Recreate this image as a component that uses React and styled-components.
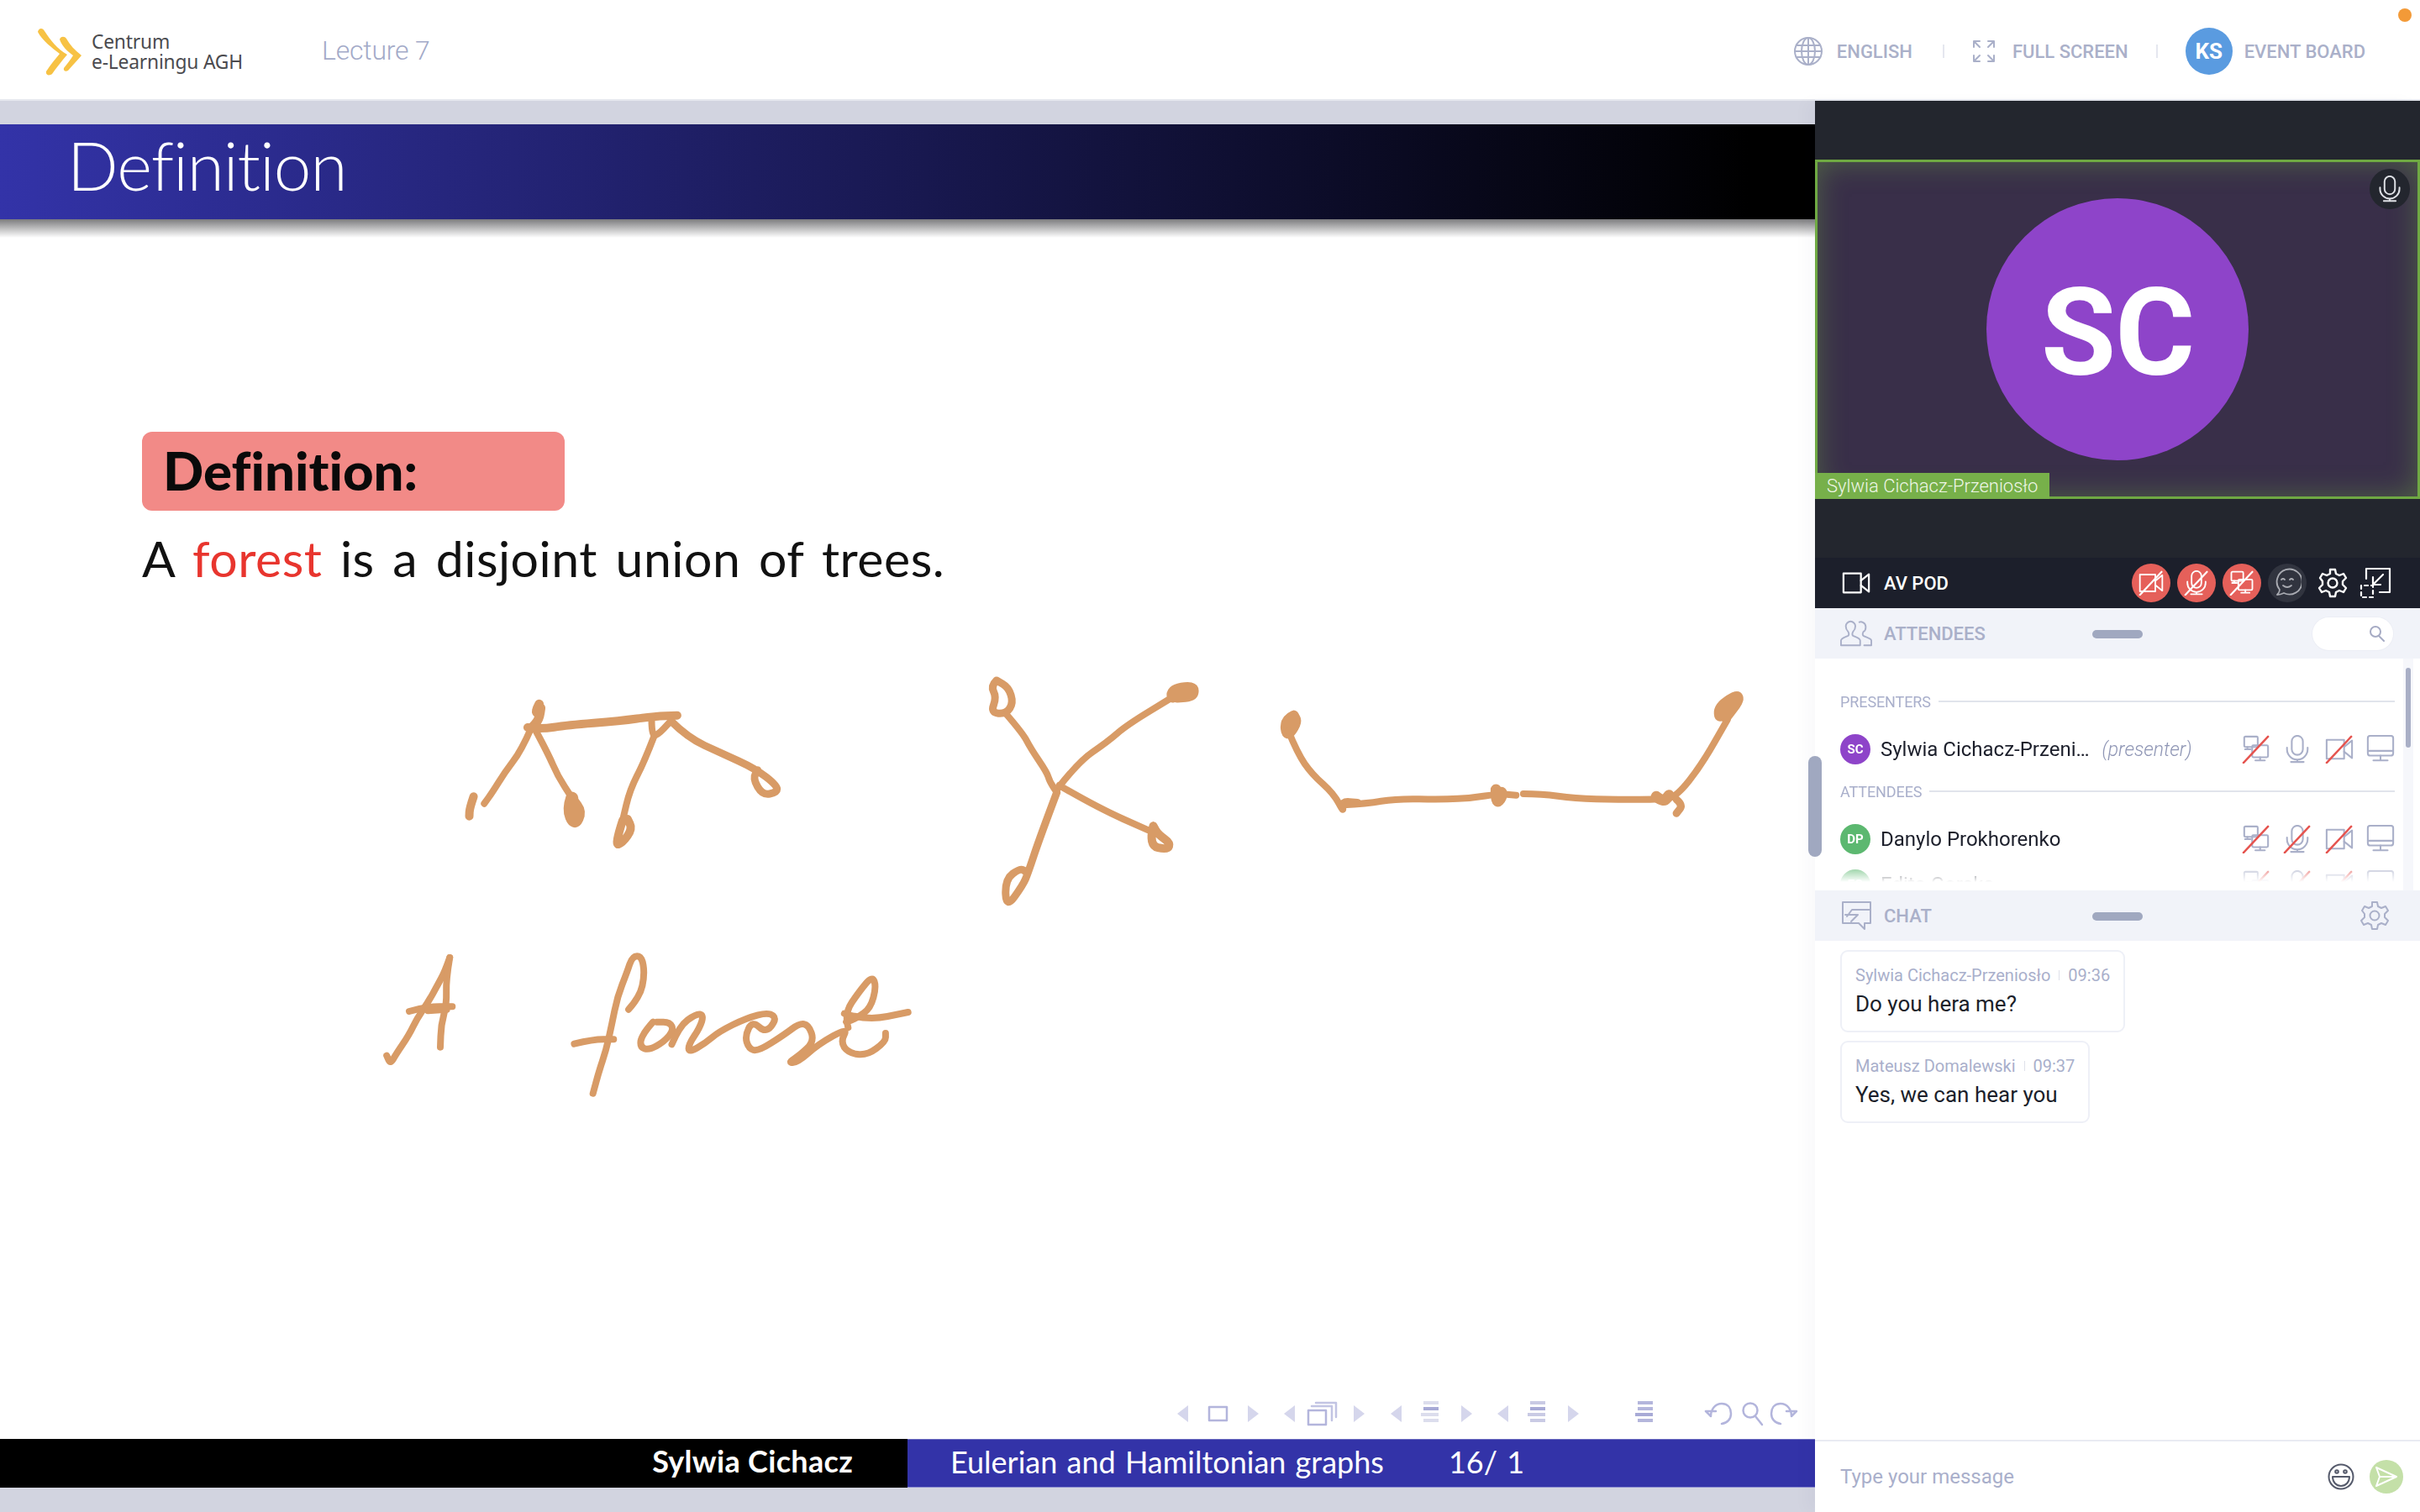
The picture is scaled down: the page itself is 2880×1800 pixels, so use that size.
import React from "react";
import styled, { createGlobalStyle } from "styled-components";

const Global = createGlobalStyle`
  html, body { margin: 0; padding: 0; background: #fff; }
  body { font-family: Roboto, "Liberation Sans", sans-serif; }
  * { box-sizing: border-box; }
`;

const Page = styled.div`
  width: 2880px; height: 1800px; display: flex; flex-direction: column; overflow: hidden; position: relative;
`;
const Dot = styled.span`
  position: absolute; left: 2854px; top: 10px; width: 16px; height: 16px; border-radius: 50%; background: #f39a38;
`;
const Header = styled.header`
  height: 120px; flex: none; display: flex; align-items: center; padding: 4px 65px 0 44px; background: #fff; border-bottom: 2px solid #e6e8ef;
`;
const Logo = styled.div`display: flex; align-items: center; gap: 11px; width: 339px; margin-top: 1px;`;
const LogoText = styled.div`
  font-family: "Noto Sans", sans-serif; font-size: 22.8px; line-height: 24px; color: #4b4b4f; letter-spacing: -.2px;
`;
const Lecture = styled.div`font-size: 32px; font-weight: 300; color: #a3aac8; letter-spacing: -.2px; margin-top: -2px;`;
const Spacer = styled.div`flex: 1;`;
const HeadItem = styled.div`
  display: flex; align-items: center; gap: ${p => p.$gap || 17}px; font-size: 22px; font-weight: 500; color: #aab0c9;
`;
const HeadSep = styled.span`width: 2px; height: 16px; background: #e5e7ef; margin: 0 33px 0 ${p => p.$l || 33}px;`;
const Avatar = styled.span`
  width: ${p => p.$s}px; height: ${p => p.$s}px; flex: none; border-radius: 50%; background: ${p => p.$bg}; color: #fff;
  display: inline-flex; align-items: center; justify-content: center; font-weight: 700; font-size: ${p => p.$f}px;
`;

const Main = styled.main`flex: 1; display: flex; min-height: 0;`;
const Slide = styled.section`
  width: 2160px; flex: none; position: relative; display: flex; flex-direction: column; background: #d2d4e0;
  font-family: Lato, "Open Sans", sans-serif; font-variant-ligatures: none;
`;
const Band = styled.div`height: ${p => p.$h}px; flex: none;`;
const Banner = styled.div`
  height: 113px; flex: none; background: linear-gradient(90deg, #3333a8 0, #000 2080px); color: #fff; padding-left: 80px;
  font-size: 80px; font-weight: 300; line-height: 96px; letter-spacing: -1px;
`;
const BannerShadow = styled.div`height: 22px; flex: none; background: linear-gradient(180deg, #7c7c7e, #ffffff);`;
const SlideBody = styled.div`flex: 1; background: #fff; display: flex; flex-direction: column; padding: 231px 0 0 169px;`;
const DefBox = styled.div`
  width: 503px; height: 94px; border-radius: 12px; background: #f28a87; color: #0a0a0a; font-weight: 900; font-size: 63.5px; line-height: 92px; padding-left: 25px;
`;
const Sentence = styled.p`
  margin: 18px 0 0; font-size: 59px; line-height: 78px; color: #111; word-spacing: 6px; letter-spacing: .5px;
`;
const Red = styled.span`color: #e8352e;`;
const NavStrip = styled.div`margin: auto 0 15px 1231px; line-height: 0;`;
const Footer = styled.div`height: 58px; flex: none; display: flex; color: #fff; font-size: 36px; line-height: 52px;`;
const FootLeft = styled.div`width: 1080px; background: #000; text-align: right; padding-right: 65px; font-weight: 700; letter-spacing: .3px;`;
const FootRight = styled.div`
  width: 1080px; background: #3333a8; padding-left: 51px; display: flex; gap: 77px; word-spacing: 2px;
  border-top: 1px solid #6c6cc0; border-bottom: 1px solid #8a8ad0;
`;
const Ink = styled.svg`position: absolute; left: 0; top: 0; pointer-events: none;`;

const Panel = styled.aside`
  width: 720px; flex: none; display: flex; flex-direction: column; background: #fff; position: relative;
  box-shadow: -12px 0 16px rgba(40, 45, 80, .025);
`;
const SlideThumb = styled.span`
  position: absolute; left: -8px; top: 780px; width: 16px; height: 120px; border-radius: 8px; background: #a0a8c0;
`;
const VideoArea = styled.div`height: 544px; flex: none; background: #23262e; padding: 70px 0;`;
const Tile = styled.div`
  height: 404px; border: 3px solid #6fa943; background: #392f49; position: relative; display: flex; align-items: center; justify-content: center;
  box-shadow: inset 0 0 34px rgba(111, 169, 67, .42);
`;
const BigAvatar = styled.div`
  width: 312px; height: 312px; border-radius: 50%; background: #8e44c9; color: #fff; font-weight: 700; font-size: 145px; letter-spacing: -1px; padding-top: 8px;
  display: flex; align-items: center; justify-content: center;
`;
const NameTag = styled.span`
  position: absolute; left: -3px; bottom: -3px; height: 31px; width: 279px; background: #77b04a; color: #eef6e6; font-size: 22px; font-weight: 300; line-height: 31px; padding-left: 14px; white-space: nowrap;
`;
const MicBadge = styled.span`
  position: absolute; right: 9px; top: 8px; width: 48px; height: 48px; border-radius: 50%; background: #23262e; display: flex; align-items: center; justify-content: center;
`;
const AvBar = styled.div`
  height: 60px; flex: none; background: #1c1f2b; display: flex; align-items: center; padding: 0 34px 0 32px; color: #fff; font-size: 22px; font-weight: 500;
`;
const SectionTitle = styled.span`margin-left: ${p => p.$m || 16}px;`;
const Round = styled.span`
  width: 46px; height: 46px; border-radius: 50%; margin-right: 8px; background: ${p => p.$bg}; display: flex; align-items: center; justify-content: center;
`;
const BarHead = styled.div`
  height: 60px; flex: none; background: #f1f3f9; display: flex; align-items: center; padding: 0 32px 0 30px; position: relative; color: #aab0c9; font-size: 22px; font-weight: 500;
`;
const Handle = styled.span`
  position: absolute; left: 330px; top: 26px; width: 60px; height: 10px; border-radius: 5px; background: #a0a8c0;
`;
const SearchPill = styled.span`
  width: 96px; height: 39px; border-radius: 20px; background: #fff; box-shadow: 0 0 0 1px #eceef5; display: flex; align-items: center; justify-content: flex-end; padding-right: 10px;
`;
const ListWrap = styled.div`height: 276px; flex: none; position: relative; overflow: hidden;`;
const List = styled.div`
  height: 266px; padding: 42px 30px 0; overflow: hidden;
  mask-image: linear-gradient(180deg, #000 240px, transparent 266px);
`;
const ListThumb = styled.span`
  position: absolute; right: 11px; top: 11px; width: 6px; height: 95px; border-radius: 3px; background: #a9afc6;
`;
const ListTrack = styled.span`position: absolute; right: 8px; top: 0; bottom: 0; width: 12px; background: #f6f7fb; `;
const GroupTitle = styled.div`
  display: flex; align-items: center; gap: 9px; font-size: 18px; color: #a9afcb; height: 18px; letter-spacing: -.1px;
`;
const Rule = styled.span`flex: 1; height: 2px; background: #e1e4ec;`;
const Person = styled.div`
  display: flex; align-items: center; height: 36px; margin: ${p => p.$top ?? 30}px 0 23px; font-size: 24px; color: #1c1f2b;
`;
const PersonName = styled.span`margin-left: 12px; white-space: nowrap;`;
const Role = styled.span`margin-left: 15px; font-style: italic; font-weight: 300; color: #8f96b5; font-size: 23px;`;
const Tools = styled.span`margin-left: auto; display: flex; align-items: center; width: 182px; justify-content: space-between;`;
const ChatBody = styled.div`flex: 1; padding: 11px 30px 0; display: flex; flex-direction: column; align-items: flex-start; gap: 10px;`;
const Bubble = styled.div`
  height: 98px; border: 2px solid #eef0f7; border-radius: 9px; padding: 16px 16px 0; background: #fff;
`;
const BubbleMeta = styled.div`display: flex; align-items: center; color: #a9afcb; font-size: 20px; line-height: 24px; white-space: nowrap;`;
const MetaSep = styled.span`width: 1px; height: 12px; background: #dfe1ea; margin: 0 10px;`;
const BubbleText = styled.div`font-size: 26px; line-height: 34px; color: #1c1f2b; margin-top: 5px; white-space: nowrap;`;
const Composer = styled.div`
  height: 86px; flex: none; border-top: 2px solid #e9ebf2; display: flex; align-items: center; padding: 0 20px 0 30px; font-size: 24px; color: #a9afcb;
`;
const Send = styled.span`
  width: 40px; height: 40px; border-radius: 50%; background: #c4e0a8; margin-left: 18px; display: flex; align-items: center; justify-content: center;
`;
const GearSlot = styled.span`display: flex; margin: 0 ${p => p.$r || 0}px 0 ${p => p.$l || 0}px;`;

const Line = styled.svg`
  display: block; flex: none; fill: none; stroke: ${p => p.$c || "#aab0c9"}; stroke-width: ${p => p.$w || 2}; stroke-linecap: round; stroke-linejoin: round;
`;

const shapes = {
  screens: <><rect x="2" y="2" width="17" height="13" rx="1.5" /><path d="M6 15v3M3 18h7" /><rect x="12" y="13" width="20" height="15" rx="1.5" /><path d="M22 28v4M16 32h12" /></>,
  mic: <><rect x="10" y="1" width="14" height="24" rx="7" /><path d="M4 16v2a13 13 0 0 0 26 0v-2M17 31v3M9 34h16" /></>,
  cam: <><rect x="1" y="6" width="22" height="24" /><path d="M23 15l10-8v22l-10-8" /></>,
  monitor: <><rect x="1" y="1" width="32" height="25" rx="3" /><path d="M1 20h32M17 26v6M8 32h18" /></>,
};
const Glyph = ({ name, c, slash, slashC = "#e5544f", w = 2.2, size = 34 }) => (
  <Line width={size} height={size} viewBox="0 0 34 36" $c={c} $w={w}>
    {shapes[name]}
    {slash && <path d="M1 35L32 2" stroke={slashC} strokeWidth={w + .4} />}
  </Line>
);
const Gear = ({ c, size = 36, w = 2.4 }) => (
  <Line width={size} height={size} viewBox="0 0 36 36" $c={c} $w={w}>
    <path d="M15 2h6l1 5 4 2 5-2 3 5-4 4v4l4 4-3 5-5-2-4 2-1 5h-6l-1-5-4-2-5 2-3-5 4-4v-4L3 12l3-5 5 2 4-2z" />
    <circle cx="18" cy="18" r="5.5" />
  </Line>
);
const Tool4 = ({ micSlash }) => (
  <Tools>
    <Glyph name="screens" slash />
    <Glyph name="mic" slash={micSlash} />
    <Glyph name="cam" slash />
    <Glyph name="monitor" />
  </Tools>
);

function toPath(pts, ox, oy, sx, sy) {
  const p = pts.map(([x, y]) => [ox + x / sx, oy + y / sy]);
  let d = `M${p[0][0].toFixed(1)} ${p[0][1].toFixed(1)}`;
  for (let i = 1; i < p.length - 1; i++) {
    const mx = (p[i][0] + p[i + 1][0]) / 2, my = (p[i][1] + p[i + 1][1]) / 2;
    d += `Q${p[i][0].toFixed(1)} ${p[i][1].toFixed(1)} ${mx.toFixed(1)} ${my.toFixed(1)}`;
  }
  const l = p[p.length - 1];
  return d + `L${l[0].toFixed(1)} ${l[1].toFixed(1)}`;
}
const z7 = [520, 780, 1.742, 3], z8 = [1440, 780, 2.306, 3], z9 = [420, 1100, 2.24, 3];
const strokes = [
  [z7, [[212,175],[203,205],[214,205],[216,180],[212,230],[195,262]], 11],
  [z7, [[195,262],[175,340],[140,420],[115,490],[98,530]]],
  [z7, [[76,505],[68,545],[67,575]], 10],
  [z7, [[205,270],[230,350],[250,430],[280,510]]],
  [z7, [[280,510],[272,550],[285,605],[297,560],[280,520]], 15],
  [z7, [[188,258],[215,265],[270,250],[380,235],[450,218],[498,215]], 10],
  [z7, [[445,230],[445,280],[455,290],[485,235]]],
  [z7, [[450,290],[430,380],[400,480],[385,590]]],
  [z7, [[385,590],[368,680],[385,670],[405,620],[395,585]], 10],
  [z7, [[485,235],[520,295],[590,350],[660,405],[705,465],[705,490],[675,500],[655,440],[665,410]], 9],
  [z7, [[1160,90],[1148,110],[1160,150],[1148,205],[1180,210],[1195,170],[1185,115],[1160,90]], 9],
  [z7, [[1180,210],[1215,280],[1230,330],[1265,420],[1270,450],[1285,490]]],
  [z7, [[1285,480],[1330,380],[1390,310],[1430,250],[1525,150]]],
  [z7, [[1525,150],[1520,125],[1568,110],[1568,145],[1535,150]], 13],
  [z7, [[1290,465],[1370,545],[1475,625]]],
  [z7, [[1485,610],[1475,680],[1515,695],[1520,670],[1495,640],[1485,610]], 10],
  [z7, [[1285,490],[1250,650],[1225,780],[1215,820],[1180,905],[1178,800],[1210,760],[1222,775]], 9],
  [z8, [[230,215],[205,230],[210,295],[240,240],[230,215]], 12],
  [z8, [[215,270],[240,350],[280,425],[340,495],[368,565],[360,520],[405,525]]],
  [z8, [[365,535],[430,530],[510,512],[640,515],[720,510],[790,495],[840,500]]],
  [z8, [[785,480],[785,530],[800,510],[800,490]], 13],
  [z8, [[860,495],[910,495],[1000,512],[1120,515],[1240,515],[1280,505],[1350,390],[1420,230]]],
  [z8, [[1225,505],[1245,525],[1260,500]], 13],
  [z8, [[1400,215],[1395,190],[1445,145],[1450,160],[1415,220]], 14],
  [z8, [[1280,515],[1298,535],[1280,565]], 9],
  [z9, [[258,120],[245,170],[225,220],[200,280],[170,340],[150,395],[115,465],[100,500],[90,470]]],
  [z9, [[258,120],[248,200],[250,285],[235,360],[233,440]]],
  [z9, [[150,312],[195,295],[265,295]]],
  [z9, [[200,310],[250,305]]],
  [z9, [[735,305],[765,260],[778,180],[770,115],[745,115],[730,175],[705,260],[690,360],[675,450],[655,530],[640,605]]],
  [z9, [[590,428],[640,412],[695,412]]],
  [z9, [[800,350],[770,395],[765,440],[790,450],[830,420],[855,380],[845,350],[810,350]]],
  [z9, [[850,430],[870,365],[915,320],[935,325],[925,370],[895,430],[895,460],[940,425],[975,385],[1050,335],[1110,315],[1130,340],[1100,390],[1065,345],[1045,400],[1055,445],[1080,455],[1150,395],[1190,355],[1215,360],[1230,420],[1190,470],[1160,495],[1185,495],[1240,430],[1320,370],[1300,420],[1320,460],[1370,470],[1420,420],[1420,390]]],
  [z9, [[1320,370],[1310,320],[1350,240],[1385,185],[1395,225],[1380,300],[1345,335],[1315,350]]],
  [z9, [[1310,320],[1370,345],[1480,315]]],
];

const Tri = ({ x, dir, o = .55 }) => (
  <path d={dir < 0 ? `M${x + 13} 7L${x} 17l13 10z` : `M${x} 7l13 10-13 10z`} fill="#b3b5dc" opacity={o} stroke="none" />
);
const Bars = ({ x, hi, base = "#dcdded" }) => (
  <g stroke="none">
    {[2, 9, 16, 23].map((y, i) => (
      <rect key={y} x={x + (i === 2 ? 0 : 3)} y={y} width={i === 2 ? 21 : 18} height="4" fill={i === hi ? "#a8aad6" : base} />
    ))}
  </g>
);
const NavIcons = () => (
  <Line width="745" height="32" viewBox="1400 0 745 32" $c="#b3b5dc" $w={2.5}>
    <Tri x={1401} dir={-1} />
    <rect x="1439" y="9" width="21" height="16" />
    <Tri x={1485} dir={1} />
    <Tri x={1528} dir={-1} />
    <path d="M1566 4h24v17M1561 8h24v17" opacity=".8" />
    <rect x="1557" y="13" width="21" height="17" fill="#fff" />
    <Tri x={1611} dir={1} />
    <Tri x={1655} dir={-1} />
    <Bars x={1691} hi={1} />
    <Tri x={1739} dir={1} />
    <Tri x={1782} dir={-1} />
    <Bars x={1818} hi={1} base="#c9cae4" />
    <Tri x={1866} dir={1} />
    <Bars x={1946} hi={2} base="#b4b6dc" />
    <path d="M2036 20l-6-6h12M2036 20c0-8 5-15 13-15 8 0 11 6 11 12s-4 11-11 12" />
    <circle cx="2083" cy="13" r="8.5" />
    <path d="M2089 20l8 10" />
    <path d="M2132 20l6-6h-12M2132 20c0-8-5-15-13-15-8 0-11 6-11 12s4 11 11 12" />
  </Line>
);

export default function App() {
  return (
    <Page>
      <Global />
      <Dot />
      <Header>
        <Logo>
          <svg width="54" height="56" viewBox="0 0 54 56">
            <path d="M1 4C2-1 7-1 9 3c7 11 15 21 27 28-7 8-13 16-18 23-4 3-8 1-7-3 5-8 11-15 16-21C18 23 6 14 1 4z" fill="#f7c244" />
            <path d="M27 13c1-4 6-4 8-1 4 7 10 14 18 20-5 6-11 12-16 18-3 2-6 0-5-3 4-5 8-10 11-15-7-5-13-11-16-19z" fill="#f7c244" />
          </svg>
          <LogoText>Centrum<br />e-Learningu AGH</LogoText>
        </Logo>
        <Lecture>Lecture 7</Lecture>
        <Spacer />
        <HeadItem>
          <Line width="34" height="34" viewBox="0 0 34 34" $w={2}>
            <circle cx="17" cy="17" r="16" /><ellipse cx="17" cy="17" rx="8" ry="16" /><path d="M17 1v32M3 10h28M3 24h28M1 17h32" />
          </Line>
          ENGLISH
        </HeadItem>
        <HeadSep $l={36} />
        <HeadItem $gap={20}>
          <Line width="28" height="28" viewBox="0 0 28 28" $w={2}>
            <path d="M2 9V2h7M2 2l7 7M26 9V2h-7M26 2l-7 7M2 19v7h7M2 26l7-7M26 19v7h-7M26 26l-7-7" />
          </Line>
          FULL SCREEN
        </HeadItem>
        <HeadSep />
        <HeadItem $gap={14}>
          <Avatar $s={56} $bg="#5a9be0" $f={26}>KS</Avatar>
          EVENT BOARD
        </HeadItem>
      </Header>
      <Main>
        <Slide>
          <Band $h={28} />
          <Banner>Definition</Banner>
          <BannerShadow />
          <SlideBody>
            <DefBox>Definition:</DefBox>
            <Sentence>A <Red>forest</Red> is a disjoint union of trees.</Sentence>
            <NavStrip><NavIcons /></NavStrip>
          </SlideBody>
          <Footer>
            <FootLeft>Sylwia Cichacz</FootLeft>
            <FootRight><span>Eulerian and Hamiltonian graphs</span><span>16/ 1</span></FootRight>
          </Footer>
          <Band $h={29} />
          <Ink width="2160" height="1680" viewBox="0 120 2160 1680" fill="none" stroke="#d89b66" strokeLinecap="round" strokeLinejoin="round">
            {strokes.map(([z, pts, w], i) => (
              <path key={i} d={toPath(pts, ...z)} strokeWidth={w || 8} />
            ))}
          </Ink>
        </Slide>
        <Panel>
          <SlideThumb />
          <VideoArea>
            <Tile>
              <BigAvatar>SC</BigAvatar>
              <NameTag>Sylwia Cichacz-Przeniosło</NameTag>
              <MicBadge><Glyph name="mic" c="#dfe1e6" size={32} /></MicBadge>
            </Tile>
          </VideoArea>
          <AvBar>
            <Glyph name="cam" c="#fff" w={2.4} />
            <SectionTitle>AV POD</SectionTitle>
            <Spacer />
            <Round $bg="#e5605a"><Glyph name="cam" c="#fff" slash slashC="#fff" size={30} /></Round>
            <Round $bg="#e5605a"><Glyph name="mic" c="#fff" slash slashC="#fff" size={30} /></Round>
            <Round $bg="#e5605a"><Glyph name="screens" c="#fff" slash slashC="#fff" size={30} /></Round>
            <Round $bg="#31343f">
              <Line width="34" height="36" viewBox="0 0 34 36" $c="#a9abb2" $w={1.8}>
                <path d="M5 32c2-2 3-4 3-6a15 15 0 1 1 5 4c-2 1-5 2-8 2z" /><path d="M10 14q2-2 4 0M20 14q2-2 4 0M12 21q5 4 10 0" />
              </Line>
            </Round>
            <GearSlot $l={5}><Gear c="#fff" /></GearSlot>
            <GearSlot $l={14}>
              <Line width="38" height="38" viewBox="0 0 38 38" $c="#fff" $w={2.2}>
                <path d="M8 14V2h28v28H24M28 9L16 21M16 12v9h9" />
                <path d="M2 22v14h14V22z" strokeDasharray="4 4" />
              </Line>
            </GearSlot>
          </AvBar>
          <BarHead>
            <Line width="38" height="32" viewBox="0 0 40 32">
              <path d="M1 31v-6c0-3 5-4 9-6 1-1 1-3 0-5-2-2-3-5-3-7 0-3 3-6 6-6s6 3 6 6c0 2-1 5-3 7-1 2-1 4 0 5 4 2 9 3 9 6v6z" />
              <path d="M24 2c2-1 8 0 8 6 0 2-1 5-3 6-1 2-1 4 0 5 3 2 10 3 10 6v6h-9" />
            </Line>
            <SectionTitle $m={14}>ATTENDEES</SectionTitle>
            <Handle />
            <Spacer />
            <SearchPill>
              <Line width="18" height="20" viewBox="0 0 18 20" $c="#a6abc4" $w={2}>
                <circle cx="7" cy="8" r="6" /><path d="M11 13l6 6" />
              </Line>
            </SearchPill>
          </BarHead>
          <ListWrap>
            <ListTrack />
            <ListThumb />
            <List>
              <GroupTitle>PRESENTERS<Rule /></GroupTitle>
              <Person>
                <Avatar $s={36} $bg="#8e44c9" $f={15}>SC</Avatar>
                <PersonName>Sylwia Cichacz-Przeni…</PersonName>
                <Role>(presenter)</Role>
                <Tool4 />
              </Person>
              <GroupTitle>ATTENDEES<Rule /></GroupTitle>
              <Person>
                <Avatar $s={36} $bg="#5cb870" $f={15}>DP</Avatar>
                <PersonName>Danylo Prokhorenko</PersonName>
                <Tool4 micSlash />
              </Person>
              <Person $top={-5}>
                <Avatar $s={36} $bg="#5cb870" $f={15}>EG</Avatar>
                <PersonName>Edita Gorska</PersonName>
                <Tool4 micSlash />
              </Person>
            </List>
          </ListWrap>
          <BarHead>
            <GearSlot $l={2}>
              <Line width="36" height="34" viewBox="0 0 36 34">
                <path d="M1 1h33v25H27v7l-7-7H1zM6 18l6-8h22M4 16h15l-8 8" />
              </Line>
            </GearSlot>
            <SectionTitle $m={14}>CHAT</SectionTitle>
            <Handle />
            <Spacer />
            <GearSlot $r={4}><Gear c="#aab0c9" w={2} /></GearSlot>
          </BarHead>
          <ChatBody>
            <Bubble>
              <BubbleMeta>Sylwia Cichacz-Przeniosło<MetaSep />09:36</BubbleMeta>
              <BubbleText>Do you hera me?</BubbleText>
            </Bubble>
            <Bubble>
              <BubbleMeta>Mateusz Domalewski<MetaSep />09:37</BubbleMeta>
              <BubbleText>Yes, we can hear you</BubbleText>
            </Bubble>
          </ChatBody>
          <Composer>
            Type your message
            <Spacer />
            <Line width="32" height="32" viewBox="0 0 32 32" $c="#555a6b" $w={2}>
              <circle cx="16" cy="16" r="14.5" /><circle cx="11" cy="10" r="1.8" /><circle cx="21" cy="10" r="1.8" /><path d="M6 16h20c0 6-4 11-10 11S6 22 6 16z" />
            </Line>
            <Send>
              <Line width="28" height="26" viewBox="0 0 28 26" $c="#fff" $w={2}>
                <path d="M2 2l24 11L2 24l4-11zM6 13h20" />
              </Line>
            </Send>
          </Composer>
        </Panel>
      </Main>
    </Page>
  );
}
